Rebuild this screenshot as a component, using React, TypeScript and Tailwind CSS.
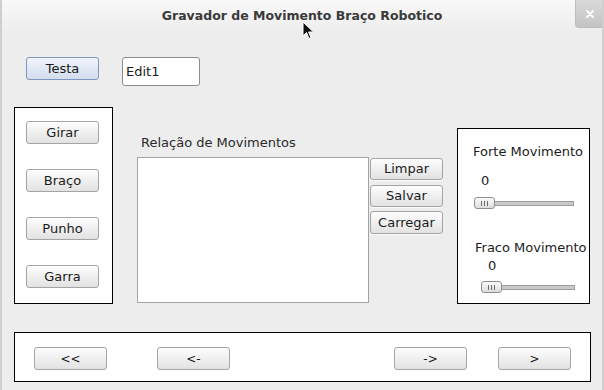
import React from "react";

const btn =
  "flex items-center justify-center rounded-[3px] border border-[#a4a4a4] bg-gradient-to-b from-[#fdfdfd] to-[#e2e2e2] text-[13px] text-[#1b1b1b] shadow-[0_1px_0_rgba(255,255,255,0.8)]";

function Slider({ width }: { width: number }) {
  return (
    <div className="relative h-[12px]" style={{ width }}>
      <div className="absolute left-[10px] right-0 top-[4px] h-[5px] border border-[#9c9c9c] bg-[#c9c9c9]" />
      <div className="absolute left-0 top-0 flex h-[12px] w-[21px] items-center justify-center gap-[2px] rounded-[3px] border border-[#8e8e8e] bg-gradient-to-b from-[#fbfbfb] to-[#dcdcdc]">
        <span className="h-[5px] w-px bg-[#6a6a6a]" />
        <span className="h-[5px] w-px bg-[#6a6a6a]" />
        <span className="h-[5px] w-px bg-[#6a6a6a]" />
      </div>
    </div>
  );
}

export default function App() {
  return (
    <div
      className="relative h-[390px] w-[604px] overflow-hidden border-x-2 border-[#cfcfcf] bg-[#ededed] text-[#1b1b1b]"
      style={{ fontFamily: '"DejaVu Sans", Verdana, sans-serif' }}
    >
      {/* title bar */}
      <div className="relative flex h-[33px] items-center justify-center bg-gradient-to-b from-[#f8f8f8] to-[#ededed]">
        <span className="text-[12.5px] font-bold text-[#3a3a3a]">
          Gravador de Movimento Braço Robotico
        </span>
        <div className="absolute right-[-2px] top-0 flex h-[28px] w-[29px] items-center justify-center rounded-bl-[4px] border-b border-l border-[#bdbdbd] bg-gradient-to-b from-[#d9d9d9] to-[#c4c4c4]">
          <svg width="10" height="10" viewBox="0 0 10 10">
            <path d="M2 2 L8 8 M8 2 L2 8" stroke="#ffffff" strokeWidth="2" strokeLinecap="round" />
          </svg>
        </div>
      </div>

      {/* row 1 */}
      <div className="mt-[24px] flex items-start">
        <div className="ml-[24px] flex h-[23px] w-[73px] items-center justify-center rounded-[3px] border border-[#7d97c0] bg-gradient-to-b from-[#f1f4fa] to-[#d3ddee] text-[13px]">
          Testa
        </div>
        <div className="ml-[23px] flex h-[29px] w-[78px] items-center rounded-[3px] border border-[#8c8c8c] bg-white pl-[3px] text-[13px]">
          Edit1
        </div>
      </div>

      {/* main row */}
      <div className="mt-[21px] flex items-start">
        <div className="ml-[12px] flex h-[197px] w-[99px] flex-col gap-[25px] border border-black bg-white pl-[11px] pt-[13px]">
          <div className={`${btn} h-[23px] w-[73px]`}>Girar</div>
          <div className={`${btn} h-[23px] w-[73px]`}>Braço</div>
          <div className={`${btn} h-[23px] w-[73px]`}>Punho</div>
          <div className={`${btn} h-[23px] w-[73px]`}>Garra</div>
        </div>

        <div className="ml-[24px] flex flex-col">
          <div className="ml-[4px] mt-[28px] h-[16px] text-[13px] leading-[16px] text-[#2a2a2a]">
            Relação de Movimentos
          </div>
          <div className="mt-[6px] h-[146px] w-[232px] border border-[#a3a3a3] bg-white" />
        </div>

        <div className="ml-[1px] mt-[51px] flex flex-col">
          <div className={`${btn} h-[22px] w-[73px]`}>Limpar</div>
          <div className={`${btn} mt-[5px] h-[22px] w-[73px]`}>Salvar</div>
          <div className={`${btn} mt-[4px] h-[23px] w-[73px]`}>Carregar</div>
        </div>

        <div className="ml-[14px] mt-[21px] flex h-[176px] w-[133px] flex-col border border-black bg-white">
          <div className="ml-[15px] mt-[15px] h-[16px] text-[13px] leading-[16px]">Forte Movimento</div>
          <div className="ml-[23px] mt-[13px] h-[16px] text-[13px] leading-[16px]">0</div>
          <div className="ml-[16px] mt-[8px]">
            <Slider width={100} />
          </div>
          <div className="ml-[17px] mt-[31px] h-[16px] text-[13px] leading-[16px]">Fraco Movimento</div>
          <div className="ml-[30px] mt-[2px] h-[16px] text-[13px] leading-[16px]">0</div>
          <div className="ml-[23px] mt-[7px]">
            <Slider width={94} />
          </div>
        </div>
      </div>

      {/* bottom panel */}
      <div className="ml-[12px] mt-[28px] flex h-[50px] w-[577px] items-start border border-black bg-white pl-[19px] pt-[14px]">
        <div className={`${btn} h-[23px] w-[73px] !text-[12px]`}>&lt;&lt;</div>
        <div className={`${btn} ml-[50px] h-[23px] w-[73px] !text-[12px]`}>&lt;-</div>
        <div className={`${btn} ml-[164px] h-[23px] w-[73px] !text-[12px]`}>-&gt;</div>
        <div className={`${btn} ml-[31px] h-[23px] w-[73px] !text-[12px]`}>&gt;</div>
      </div>

      {/* mouse cursor */}
      <svg className="absolute left-[300px] top-[21px]" width="13" height="20" viewBox="0 0 13 20">
        <path d="M1 1 L1 15 L4.5 11.5 L7 17.5 L9 16.6 L6.6 11 L11.5 11 Z" fill="#111" stroke="#fff" strokeWidth="1" />
      </svg>
    </div>
  );
}
